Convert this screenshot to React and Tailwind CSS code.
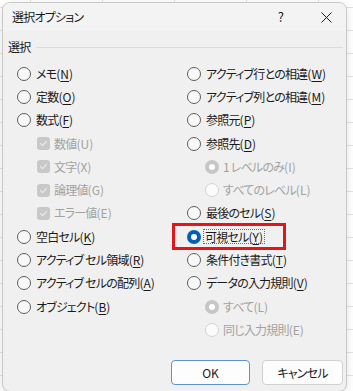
import React from "react";

const font = { fontFamily: '"Noto Sans CJK JP", "Noto Sans", sans-serif' };

const Label = ({ text, keyChar, disabled }) => (
    <span className={disabled ? "text-[#a2a2a2]" : "text-[#1a1a1a]"}>
        {text}
        <span className="tracking-normal">
            (
            {disabled ? keyChar : <span className="underline underline-offset-[2px] decoration-[1px]">{keyChar}</span>}
            )
        </span>
    </span>
);

const Radio = ({ checked, disabled }) => {
    if (checked && disabled) {
        return (
            <span className="flex h-[14px] w-[14px] shrink-0 items-center justify-center rounded-full bg-[#c6c6c6]">
                <span className="h-[6px] w-[6px] rounded-full bg-white" />
            </span>
        );
    }
    if (checked) {
        return (
            <span className="flex h-[14px] w-[14px] shrink-0 items-center justify-center rounded-full bg-[#005fb8]">
                <span className="h-[6px] w-[6px] rounded-full bg-white" />
            </span>
        );
    }
    if (disabled) {
        return <span className="h-[14px] w-[14px] shrink-0 rounded-full border border-[#d3d3d3] bg-[#fbfbfb]" />;
    }
    return <span className="h-[14px] w-[14px] shrink-0 rounded-full border border-[#5d5d5d] bg-[#f8f8f8]" />;
};

const Check = () => (
    <span className="flex h-[13px] w-[13px] shrink-0 items-center justify-center rounded-[3px] bg-[#c8c8c8]">
        <svg width="9" height="9" viewBox="0 0 9 9" fill="none">
            <path d="M1.5 4.6 L3.6 6.6 L7.5 2.4" stroke="#ececec" strokeWidth="1.2" strokeLinecap="round" strokeLinejoin="round" />
        </svg>
    </span>
);

const Row = ({ children, className = "" }) => (
    <div className={`flex h-[23.3px] items-center ${className}`}>{children}</div>
);

const RadioRow = ({ text, keyChar, checked, disabled, indent }) => (
    <Row className={indent ? "pl-[18px]" : ""}>
        <Radio checked={checked} disabled={disabled} />
        <span className={indent ? "ml-[4px]" : "ml-[5px]"}>
            <Label text={text} keyChar={keyChar} disabled={disabled} />
        </span>
    </Row>
);

const CheckRow = ({ text, keyChar }) => (
    <Row className="pl-[20px]">
        <Check />
        <span className="ml-[4px]">
            <Label text={text} keyChar={keyChar} disabled />
        </span>
    </Row>
);

export default function App() {
    return (
        <div
            className="h-[391px] w-[353px] overflow-hidden bg-white bg-[linear-gradient(#e2e2e2_1px,transparent_1px),linear-gradient(90deg,#e2e2e2_1px,transparent_1px)] bg-[size:72px_23px] bg-[position:30px_7px] pl-[2px] pt-[2px] text-[12px] tracking-[-0.8px] [font-feature-settings:'palt']"
            style={font}
        >
            <div className="flex h-[390px] w-[345px] flex-col overflow-hidden rounded-[8px] border border-[#c9c9c9] bg-[#f0f0f0] shadow-[0_2px_8px_rgba(0,0,0,0.12)]">
                {/* title bar */}
                <div className="flex h-[28px] shrink-0 items-center bg-[#f3f3f3] pl-[9px]">
                    <span className="text-[12px] text-[#1a1a1a]">選択オプション</span>
                    <span className="ml-auto mr-[38px] text-[13px] text-[#1a1a1a]">?</span>
                    <svg className="mr-[14px]" width="11" height="11" viewBox="0 0 11 11">
                        <path d="M0.5 0.5 L10.5 10.5 M10.5 0.5 L0.5 10.5" stroke="#1a1a1a" strokeWidth="1" />
                    </svg>
                </div>

                {/* group label */}
                <div className="mt-[8px] flex h-[16px] items-center pl-[5px] pr-[3px]">
                    <span className="text-[#1a1a1a]">選択</span>
                    <span className="ml-[6px] h-px flex-1 bg-[#dcdcdc]" />
                </div>

                <div className="mt-[7px] grid grid-cols-[170px_1fr] pl-[14px]">
                    <div className="flex flex-col">
                        <RadioRow text="メモ" keyChar="N" />
                        <RadioRow text="定数" keyChar="O" />
                        <RadioRow text="数式" keyChar="F" />
                        <CheckRow text="数値" keyChar="U" />
                        <CheckRow text="文字" keyChar="X" />
                        <CheckRow text="論理値" keyChar="G" />
                        <CheckRow text="エラー値" keyChar="E" />
                        <RadioRow text="空白セル" keyChar="K" />
                        <RadioRow text="アクティブ セル領域" keyChar="R" />
                        <RadioRow text="アクティブ セルの配列" keyChar="A" />
                        <RadioRow text="オブジェクト" keyChar="B" />
                    </div>
                    <div className="flex flex-col">
                        <RadioRow text="アクティブ行との相違" keyChar="W" />
                        <RadioRow text="アクティブ列との相違" keyChar="M" />
                        <RadioRow text="参照元" keyChar="P" />
                        <RadioRow text="参照先" keyChar="D" />
                        <RadioRow text="1 レベルのみ" keyChar="I" checked disabled indent />
                        <RadioRow text="すべてのレベル" keyChar="L" disabled indent />
                        <RadioRow text="最後のセル" keyChar="S" />
                        <div className="-ml-[15px] -my-[2px] w-[114px] border-[3px] border-[#e0161b] pl-[12px]">
                            <div className="flex h-[21.3px] items-center">
                                <Radio checked />
                                <span className="ml-[2px] border border-dotted border-[#6b6b6b] px-[1px] leading-[13px]">
                                    <Label text="可視セル" keyChar="Y" />
                                </span>
                            </div>
                        </div>
                        <RadioRow text="条件付き書式" keyChar="T" />
                        <RadioRow text="データの入力規則" keyChar="V" />
                        <RadioRow text="すべて" keyChar="L" checked disabled indent />
                        <RadioRow text="同じ入力規則" keyChar="E" disabled indent />
                    </div>
                </div>

                {/* buttons */}
                <div className="mt-auto mb-[6px] flex justify-end gap-[12px] pr-[3px]">
                    <button className="h-[25px] w-[79px] rounded-[4px] border border-[#5a95cf] bg-[#fdfdfd] text-[12px] tracking-normal text-[#1a1a1a]">
                        OK
                    </button>
                    <button className="h-[25px] w-[81px] rounded-[4px] border border-[#d0d0d0] bg-[#fdfdfd] text-[12px] text-[#1a1a1a]">
                        キャンセル
                    </button>
                </div>
            </div>
        </div>
    );
}
